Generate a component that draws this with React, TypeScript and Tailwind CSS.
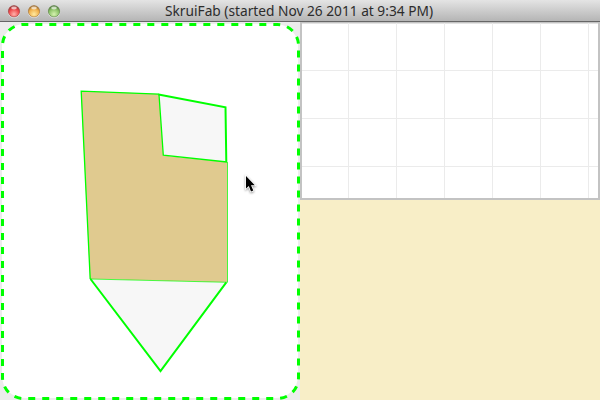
import React from "react";

const lights = [
  { id: "close", light: "#ffb3ac", base: "#ee4a4c", rim: "#8e3434" },
  { id: "minimize", light: "#ffeaa0", base: "#f0b04c", rim: "#94652d" },
  { id: "zoom", light: "#d6f2b0", base: "#8cc268", rim: "#4b7238" },
];

function TitleBar() {
  return (
    <header className="relative flex h-[22px] shrink-0 items-center border-b border-[#666666] bg-linear-to-b from-[#e4e4e4] to-[#b5b5b5]">
      <div className="flex gap-[6px] pl-[7px]">
        {lights.map((l) => (
          <svg key={l.id} className="h-[14px] w-[14px]" viewBox="0 0 14 14">
            <defs>
              <radialGradient id={l.id} cx="50%" cy="75%" r="75%">
                <stop offset="0" stopColor={l.light} />
                <stop offset="0.6" stopColor={l.base} />
                <stop offset="1" stopColor={l.rim} />
              </radialGradient>
            </defs>
            <circle cx="7" cy="7.6" r="6.3" fill="#eeeeee" />
            <circle cx="7" cy="7.3" r="5.7" fill={`url(#${l.id})`} stroke={l.rim} strokeWidth="0.7" strokeOpacity="0.8" />
            <ellipse cx="7" cy="4" rx="2.8" ry="1.4" fill="#fff" opacity="0.65" />
          </svg>
        ))}
      </div>
      <h1 className="absolute top-0 left-[165px] text-[14px] leading-[22px] whitespace-nowrap">
        <svg className="block h-[21px] w-[270px] overflow-visible">
          <text x="0" y="16" textLength="268" lengthAdjust="spacingAndGlyphs" fill="#2c2c2c">
            SkruiFab (started Nov 26 2011 at 9:34 PM)
          </text>
        </svg>
      </h1>
    </header>
  );
}

function DrawingCanvas() {
  return (
    <section className="h-[378px] w-[300px] shrink-0 bg-[#ececec]">
      <svg className="block h-[378px] w-[300px]" viewBox="0 22 300 378">
        <rect x="2" y="24" width="296" height="374" rx="22" fill="#fff" />
        <path
          d="M2.5 51V377.5A21 21 0 0 0 23.5 398.5H277.5A21 21 0 0 0 298.5 377.5V45.5A21 21 0 0 0 277.5 24.5H23.5A21 21 0 0 0 2.5 45.5"
          fill="none"
          stroke="#00ff00"
          strokeWidth="3"
          strokeDasharray="7 7"
        />
        <path d="M81 91L159 94L163.5 155.5L227.5 162V282.5L90 279Z" fill="#e0ca8f" />
        <path d="M159 94.5L225.5 107.5L226.5 162L163.5 155.5Z" fill="#f7f7f7" />
        <path d="M90 279L227 282.5L160.5 371.5Z" fill="#f7f7f7" />
        <g fill="none" stroke="#00ff00">
          <path d="M159 94.2L81.2 91.2L90.2 279" strokeWidth="1.3" />
          <path d="M159 94.5L163.3 155.2L227 162" strokeWidth="1.3" />
          <path d="M158.5 94.5L225.5 107.3L226.3 162" strokeWidth="2" />
          <path d="M227.5 162V282.3L90 279" strokeWidth="1" opacity="0.7" />
          <path d="M90.5 279L160.5 371.2L226.3 282.3" strokeWidth="2" />
        </g>
        <path
          d="M246 176V188.5L248.8 186L251 191.5L253.3 190.5L251 185.2H254.8Z"
          fill="#000"
          stroke="#fff"
          strokeWidth="1.6"
          paintOrder="stroke"
          className="drop-shadow-[0_1px_1px_rgba(0,0,0,0.4)]"
        />
      </svg>
    </section>
  );
}

function GridPanel() {
  return (
    <div className="h-[178px] w-full border-2 border-t border-[#c3c3c3] bg-white">
      <svg className="block h-[175px] w-[296px]" viewBox="302 23 296 175">
        <rect x="302" y="23" width="296" height="1" fill="#e3e3e3" />
        <g stroke="#ebebeb" strokeWidth="1">
          {[348.5, 396.5, 444.5, 492.5, 540.5, 588.5].map((x) => (
            <line key={x} x1={x} x2={x} y1="23" y2="198" />
          ))}
          {[70.5, 118.5, 166.5].map((y) => (
            <line key={y} x1="302" x2="598" y1={y} y2={y} />
          ))}
        </g>
      </svg>
    </div>
  );
}

export default function App() {
  return (
    <div className="flex h-[400px] w-[600px] flex-col overflow-hidden bg-[#ececec] font-['Noto_Sans',sans-serif]">
      <TitleBar />
      <main className="flex">
        <DrawingCanvas />
        <section className="h-[378px] w-[300px] bg-[#f8eec7]">
          <GridPanel />
        </section>
      </main>
    </div>
  );
}
